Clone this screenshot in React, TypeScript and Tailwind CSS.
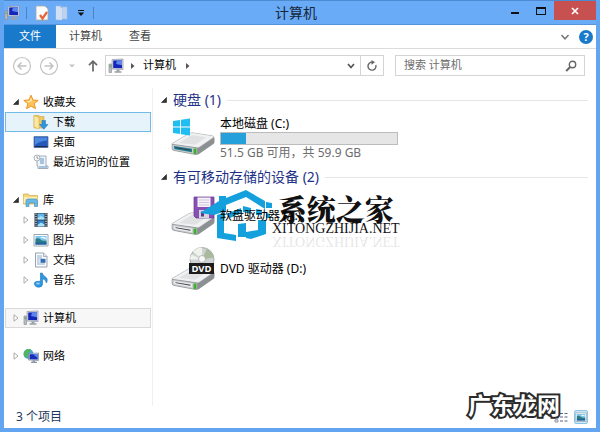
import React from "react";

type IconProps = { className?: string };

const ComputerIcon: React.FC<IconProps> = ({ className = "w-4 h-4" }) => (
  <svg viewBox="0 0 16 16" className={className} aria-hidden="true">
    <path d="M1 6h2.500v8.500H1z" fill="#b9bcc0" stroke="#85888c" strokeWidth=".6" />
    <path d="M1.700 7.500h1.200v1.500H1.700z" fill="#4ca84c" />
    <path d="M4 1.500 15 1v10.500L4 11z" fill="#d7dae0" stroke="#8f95a3" strokeWidth=".7" />
    <path d="M5.200 2.600 14 2.200v8L5.200 9.900z" fill="#1426b8" />
    <path d="M9 2.400 14 2.200v5L8 6z" fill="#5e86ee" />
    <path d="M8.500 11.500h3v1.800h2v1.500h-7v-1.500h2z" fill="#9da1aa" />
  </svg>
);

const StarIcon = () => (
  <svg viewBox="0 0 16 16" className="w-4 h-4" aria-hidden="true">
    <path
      d="M8 1.200 10 6l5.200.4-4 3.300 1.300 5L8 12l-4.500 2.700 1.300-5-4-3.300L6 6z"
      fill="#fcc35a"
      stroke="#ef9423"
      strokeWidth="1"
      strokeLinejoin="round"
    />
    <path d="M8 3.500 9 7 5 8.500 3.500 7.200 7 6.700z" fill="#fff0b8" />
  </svg>
);

const DownloadsIcon = () => (
  <svg viewBox="0 0 16 16" className="w-4 h-4" aria-hidden="true">
    <path d="M1 1.500h5l1 1h4V14H1z" fill="#ecc767" stroke="#d5a63c" strokeWidth=".6" />
    <path d="M1 1.500 6 3.500V15l-5-2z" fill="#fae7a4" stroke="#d5a63c" strokeWidth=".5" />
    <path d="M9 6.500h3.500v4H15l-4.200 4.800L6.500 10.500H9z" fill="#2d96e0" stroke="#1a6fb5" strokeWidth=".5" />
  </svg>
);

const DesktopIcon = () => (
  <svg viewBox="0 0 16 16" className="w-4 h-4" aria-hidden="true">
    <path d="M1 2.500h14v11H1z" fill="#2559b8" stroke="#5d7aa8" strokeWidth=".8" />
    <path d="M2 3.500h12v3C9 7 6 8 2 11z" fill="#4b8ae0" />
    <path d="M1.500 12h13v1.200h-13z" fill="#1b2d55" />
  </svg>
);

const RecentIcon = () => (
  <svg viewBox="0 0 16 16" className="w-4 h-4" aria-hidden="true">
    <path d="M4 2h9v10h2v2.500H5V12H4z" fill="#f2f5f8" stroke="#8d9aa8" strokeWidth=".8" />
    <path d="M7 5h4M7 7h4M7 9h4M6 13h8" stroke="#5793ca" strokeWidth="1" />
    <circle cx="4" cy="4" r="3" fill="#f4f6f8" stroke="#9aa2ab" strokeWidth=".8" />
    <path d="M4 2.300V4l1.500.7" stroke="#555" strokeWidth=".6" fill="none" />
  </svg>
);

const LibraryIcon = () => (
  <svg viewBox="0 0 16 16" className="w-4 h-4" aria-hidden="true">
    <path d="M.5 2h5l1 1.500h8V12H.5z" fill="#f3d77c" stroke="#d0ab48" strokeWidth=".7" />
    <path d="M.8 5h13.500v6H.8z" fill="#fbedb4" />
    <path d="M3 14.500V9q0-2 2-2h7.500q2 0 2 2v5.500h-3V11H6v3.500z" fill="#68b9e8" stroke="#3c87bb" strokeWidth=".6" />
  </svg>
);

const VideoIcon = () => (
  <svg viewBox="0 0 16 16" className="w-4 h-4" aria-hidden="true">
    <path d="M1.500 1h13v14h-13z" fill="#333b42" />
    <path d="M4.500 1.500h7v6h-7z" fill="#60b8ee" />
    <path d="M4.500 8.500h7v6h-7z" fill="#2e86d0" />
    <path d="M4.500 6 8 4l3.500 2v1.500h-7zM4.500 13 8 10.500l3.500 2v2h-7z" fill="#aee0f6" />
    <path d="M3 1.500v13M13 1.500v13" stroke="#dfe5ea" strokeWidth="1.200" strokeDasharray="1.200 1.200" />
  </svg>
);

const PictureIcon: React.FC<IconProps> = ({ className = "w-4 h-4" }) => (
  <svg viewBox="0 0 16 16" className={className} aria-hidden="true">
    <path d="M1 2.500h14v11.500H1z" fill="#fff" stroke="#8e9ca8" strokeWidth=".9" />
    <path d="M2.500 4h11v8.500h-11z" fill="#7cc7ee" />
    <path d="M2.500 7q3-1.500 5 .5t6 1v4h-11z" fill="#2c7d83" />
    <path d="M2.500 10.500h11v2h-11z" fill="#2461a4" />
    <path d="M7 5.500q3-1.500 6 .5v1z" fill="#fff" />
  </svg>
);

const DocumentIcon = () => (
  <svg viewBox="0 0 16 16" className="w-4 h-4" aria-hidden="true">
    <path d="M2.500 1h8L14 4.500V15H2.500z" fill="#fbfcfd" stroke="#8d99a5" strokeWidth=".9" />
    <path d="M10.500 1v3.500H14" fill="#dce3ea" stroke="#8d99a5" strokeWidth=".7" />
    <path d="M4 4h5M4 6h5M4 8h2.500M4 10h2.500M4 12h8" stroke="#7fa5cc" strokeWidth=".9" />
    <path d="M7.500 6.800h5v4h-5z" fill="#336cb2" />
  </svg>
);

const MusicIcon = () => (
  <svg viewBox="0 0 16 16" className="w-4 h-4" aria-hidden="true">
    <path
      d="M7.500 1h1.700q.5 2.500 3.300 4t1 6q-.5-3.500-4-4.300V12q0 3-3.500 3.200T1.500 12.500 5 9.300q1.700-.3 2.500.2z"
      fill="#2d98e2"
      stroke="#1b6fb8"
      strokeWidth=".6"
    />
    <ellipse cx="5" cy="11.500" rx="1.800" ry="1" fill="#8fd0f7" />
  </svg>
);

const NetworkIcon = () => (
  <svg viewBox="0 0 16 16" className="w-4 h-4" aria-hidden="true">
    <circle cx="5.500" cy="6" r="5" fill="#44a9dd" />
    <path d="M2 2.500q3-2.500 6-1L7 4 4.500 5 5 8 3.500 10Q0 8 .8 5z" fill="#50b656" />
    <path d="M5.500 5.500 15.500 5v7.500l-10-.5z" fill="#d4d9e2" stroke="#69758f" strokeWidth=".6" />
    <path d="M6.500 6.300 14.700 6v5.500l-8.200-.3z" fill="#1630bb" />
    <path d="m10 6.200 4.700-.2v4z" fill="#5f8df0" />
    <path d="M9.500 12.500h2.500v1.200h2V15H8v-1.300h1.500z" fill="#8f97a6" />
  </svg>
);

const Arrow: React.FC<{ open?: boolean }> = ({ open }) => (
  <svg viewBox="0 0 6 8" className="w-[6px] h-2 shrink-0" aria-hidden="true">
    {open ? (
      <path d="M5.500 1.500v5H.5z" fill="#333" stroke="#222" strokeWidth=".6" />
    ) : (
      <path d="M1 .8 5 4 1 7.200z" fill="#fff" stroke="#999" strokeWidth=".8" />
    )}
  </svg>
);

interface TreeItem {
  label: string;
  icon: React.ReactNode;
  arrow?: "open" | "closed";
  child?: boolean;
  state?: "hover" | "selected";
}

const tree: TreeItem[][] = [
  [
    { label: "收藏夹", icon: <StarIcon />, arrow: "open" },
    { label: "下载", icon: <DownloadsIcon />, child: true, state: "hover" },
    { label: "桌面", icon: <DesktopIcon />, child: true },
    { label: "最近访问的位置", icon: <RecentIcon />, child: true },
  ],
  [
    { label: "库", icon: <LibraryIcon />, arrow: "open" },
    { label: "视频", icon: <VideoIcon />, arrow: "closed", child: true },
    { label: "图片", icon: <PictureIcon />, arrow: "closed", child: true },
    { label: "文档", icon: <DocumentIcon />, arrow: "closed", child: true },
    { label: "音乐", icon: <MusicIcon />, arrow: "closed", child: true },
  ],
  [{ label: "计算机", icon: <ComputerIcon />, arrow: "closed", state: "selected" }],
  [{ label: "网络", icon: <NetworkIcon />, arrow: "closed" }],
];

function rowColors(state?: string) {
  if (state === "hover") return "border-[#72bbe6] bg-[#e6f3fb]";
  if (state === "selected") return "border-[#dadada] bg-[#f7f7f7]";
  return "border-transparent";
}

const Sidebar = () => (
  <nav className="w-[149px] shrink-0 border-r border-[#f0f0f0] px-px pt-1 flex flex-col gap-[18px]">
    {tree.map((group, i) => (
      <ul key={i}>
        {group.map((item) => (
          <li key={item.label}>
            <button
              className={`w-full h-5 flex items-center gap-1 border text-[11px] leading-4 ${
                item.child ? "pl-[17px]" : "pl-[7px]"
              } ${rowColors(item.state)}`}
            >
              {item.arrow ? <Arrow open={item.arrow === "open"} /> : <span className="w-[6px]" />}
              {item.icon}
              <span className="whitespace-nowrap">{item.label}</span>
            </button>
          </li>
        ))}
      </ul>
    ))}
  </nav>
);

const DriveBody: React.FC<{ teal?: boolean }> = ({ teal }) => (
  <>
    <path d="M1 27.500 18 17.500q2-1 4-.7l19.500 3q2 .5 2 2.500v3.500q0 1.500-1.500 2.500L28 38q-1.500 1-3.500.6L3 34.500q-2-.5-2-2.500z" fill="#8c9093" />
    <path d="m1 27.500 17-10q2-1 4-.7l19.500 3q2.500.7.5 2L28.500 31q-1.500 1-3.500.6L2 28.500q-1.500-.4-1-1z" fill="#f0f1f2" stroke="#b4b7b9" strokeWidth=".5" />
    <path d="m8 27 13-8 14 2.200-10.500 7.600z" fill="#dfe1e3" />
    <path d="m1 28.300 24.500 3.500q1 .2 1 1.500V38q-1 .8-2 .6L3 34.500q-2-.5-2-2.500z" fill="#c9ccce" stroke="#7c8184" strokeWidth=".5" />
    <path d="m3 30 18 2.800v3.500L4 33.200q-1-.3-1-1.200z" fill={teal ? "#237f96" : "#eceded"} />
    <path d="m4.500 31.300 15 2.500v.9l-15-2.700z" fill="#34393c" />
    <path d="M22.500 32.500h3V38h-3z" fill="#43ac33" />
  </>
);

const HardDiskIcon = () => (
  <svg viewBox="0 0 44 40" className="w-11 h-10 shrink-0" aria-hidden="true">
    <DriveBody teal />
    <path d="m2 5 7-1v6.500H2zM10 3.800 19 2.500v8h-9zM2 11.500h7V18l-7-1zM10 11.500h9v8l-9-1.300z" fill="#20bdf2" />
  </svg>
);

const FloppyDriveIcon = () => (
  <svg viewBox="0 0 44 40" className="w-11 h-10 shrink-0" aria-hidden="true">
    <DriveBody />
    <path d="M23 1h20v21H25l-2-2z" fill="#8950b3" stroke="#653790" strokeWidth=".7" />
    <path d="M26.500 1.500h13V11h-13z" fill="#f4f1f8" />
    <path d="M28 4h10M28 6.500h10M28 9h10" stroke="#c4b4d3" strokeWidth=".7" />
    <path d="M28 14h10v8H28z" fill="#d5d5dd" />
    <path d="M30 15.500h3v5h-3z" fill="#603785" />
  </svg>
);

const DvdDriveIcon = () => (
  <svg viewBox="0 0 44 44" className="w-11 h-11 shrink-0" aria-hidden="true">
    <g transform="translate(0 4)">
      <DriveBody />
    </g>
    <circle cx="31" cy="12.500" r="12" fill="#cfd2d2" stroke="#909596" strokeWidth=".7" />
    <path d="M31 12.500 22 4.500q4-4 9-4zM31 12.500h-12q0-3 1.500-5z" fill="#eff3ec" />
    <path d="M31 12.500 36 1.500q6 3 7 9z" fill="#a9b99e" />
    <circle cx="31" cy="12" r="3.500" fill="#f7f7f7" stroke="#999" strokeWidth=".6" />
    <path d="M18 16h25v11H18z" fill="#1b1b1b" />
    <text x="30.500" y="25" fontSize="9.500" fontWeight="700" textAnchor="middle" fill="#fff" fontFamily="Noto Sans, sans-serif">
      DVD
    </text>
  </svg>
);

const SectionTitle: React.FC<{ children: React.ReactNode }> = ({ children }) => (
  <div className="flex items-center gap-[6px] h-6">
    <Arrow open />
    <h2 className="text-[14px] leading-6 text-[#1e3287] whitespace-nowrap">{children}</h2>
    <span className="flex-1 h-px bg-[#e6e6e6]" />
  </div>
);

const Watermark = () => (
  <div className="absolute left-[39px] top-0 flex items-start pointer-events-none">
    <svg viewBox="0 0 80 56" className="w-20 h-14 -mr-2" aria-hidden="true">
      <path
        d="M0 24 19 12V7h7v2L46 1l19 11v8L46 8 26 16v6L14 26z"
        fill="#14a0dc"
      />
      <path d="M17 26l8-3v6l-1 1v14l12 2v6l-19-3zM26 25l15-6v5l-11 5zM38 35l8-1v14h-8zM46 43l12-2V31h8v14l-15 5-5-1z" fill="#14a0dc" />
      <path d="M43 17l8 2v6l-8-2zM56 20l6 1v5h-6zM66 13l6 1v5h-6zM66 24l4 1v4h-4z" fill="#14a0dc" />
    </svg>
    <div className="flex flex-col items-center text-[#111] pt-[6px]">
      <span className='font-["Noto_Serif_CJK_SC","Noto_Sans_CJK_SC",serif] font-black text-[29px] leading-7 whitespace-nowrap'>
        系统之家
      </span>
      <span className='font-["Liberation_Serif",serif] text-[14px] leading-3'>XITONGZHIJIA.NET</span>
      <span
        className='font-["Liberation_Serif",serif] text-[14px] leading-3 -scale-y-100 opacity-10'
        aria-hidden="true"
      >
        XITONGZHIJIA.NET
      </span>
    </div>
  </div>
);

const TitleBar = () => (
  <header className="h-[25px] grid grid-cols-[1fr_auto_1fr] border-t border-[#4c8ad2] border-b border-b-[#5695dc]">
    <div className="flex items-center">
      <ComputerIcon />
      <span className="w-px h-3 bg-[#4d84c0] ml-[6px]" />
      <button aria-label="属性" className="ml-2">
        <svg viewBox="0 0 14 16" className="w-[14px] h-4">
          <path d="M1 1h9l3 3v11H1z" fill="#fbfbfb" stroke="#aaa7a0" strokeWidth=".8" />
          <path d="m5 10 2.500 3.500L12 7" fill="none" stroke="#e8623a" strokeWidth="2.200" />
        </svg>
      </button>
      <button aria-label="新建文件夹" className="ml-[6px]">
        <svg viewBox="0 0 14 16" className="w-[14px] h-4">
          <path d="M1 1h5v14H1zM7 2h5v12H7z" fill="#bcd2ee" stroke="#a6c0e3" strokeWidth=".6" />
          <path d="M1 1l6 2v12l-6-1z" fill="#d2e0f3" />
        </svg>
      </button>
      <button aria-label="自定义快速访问工具栏" className="ml-2">
        <svg viewBox="0 0 8 8" className="w-2 h-2">
          <path d="M1 1h6v1H1zM.8 3.500h6.400L4 7z" fill="#111" />
        </svg>
      </button>
      <span className="w-px h-3 bg-[#4d84c0] ml-2" />
    </div>
    <h1 className="text-[14px] leading-[23px] mr-2 text-[#16263a]">计算机</h1>
    <div className="flex justify-end items-start">
      <button aria-label="最小化" className="w-[26px] h-5 flex items-center justify-center">
        <span className="w-2 h-[2px] bg-[#111] mt-1" />
      </button>
      <button aria-label="最大化" className="w-[26px] h-5 flex items-center justify-center">
        <span className="w-[10px] h-2 border border-t-2 border-[#111]" />
      </button>
      <button aria-label="关闭" className="w-[42px] h-[19px] bg-[#c75050] flex items-center justify-center">
        <svg viewBox="0 0 8 8" className="w-2 h-2">
          <path d="m1 1 6 6M7 1 1 7" stroke="#fff" strokeWidth="1.700" />
        </svg>
      </button>
    </div>
  </header>
);

const RibbonTabs = () => (
  <div className="flex items-center h-6 border-b border-[#dadbdc] text-[11px] text-[#444]">
    <button className="w-[52px] h-full bg-[#1979ca] text-white">文件</button>
    <button className="ml-[13px]">计算机</button>
    <button className="ml-[27px]">查看</button>
    <button aria-label="展开功能区" className="ml-auto">
      <svg viewBox="0 0 10 8" className="w-[10px] h-2">
        <path d="m1.500 2 3.500 3.800L8.500 2" fill="none" stroke="#777" strokeWidth="1.500" />
      </svg>
    </button>
    <button
      aria-label="帮助"
      className="ml-[9px] mr-[3px] w-[14px] h-[14px] rounded-full bg-[#1979ca] text-white font-bold leading-[14px]"
    >
      ?
    </button>
  </div>
);

const AddressBar = () => (
  <div className="flex items-center px-2 py-[6px] text-[11px]">
    <button aria-label="后退">
      <svg viewBox="0 0 20 20" className="w-5 h-5" fill="none" stroke="#c2c2c2">
        <circle cx="10" cy="10" r="8.500" strokeWidth="1.200" />
        <path d="M14.500 10H6M9.500 6.500 6 10l3.500 3.500" strokeWidth="1.500" />
      </svg>
    </button>
    <button aria-label="前进" className="ml-[7px]">
      <svg viewBox="0 0 20 20" className="w-5 h-5" fill="none" stroke="#c2c2c2">
        <circle cx="10" cy="10" r="8.500" strokeWidth="1.200" />
        <path d="M5.500 10H14M10.500 6.500 14 10l-3.500 3.500" strokeWidth="1.500" />
      </svg>
    </button>
    <button aria-label="最近位置" className="ml-[10px]">
      <svg viewBox="0 0 6 4" className="w-[6px] h-1">
        <path d="M0 .5h6L3 3.500z" fill="#c4c4c4" />
      </svg>
    </button>
    <button aria-label="上移" className="ml-3">
      <svg viewBox="0 0 12 14" className="w-3 h-[14px]" fill="none" stroke="#666" strokeWidth="1.700">
        <path d="M6 12.500V2.500M2 6.200l4-4 4 4" />
      </svg>
    </button>
    <div className="flex-1 flex items-center h-[21px] ml-[6px] border border-[#d4d4d4] pl-[2px]">
      <ComputerIcon />
      <svg viewBox="0 0 6 8" className="w-[6px] h-2 ml-[6px]">
        <path d="M1 1v6l3.500-3z" fill="#555" />
      </svg>
      <button className="ml-[7px]">计算机</button>
      <svg viewBox="0 0 6 8" className="w-[6px] h-2 ml-[9px]">
        <path d="M1 1v6l3.500-3z" fill="#555" />
      </svg>
      <button aria-label="以前的位置" className="ml-auto mr-1">
        <svg viewBox="0 0 10 8" className="w-[10px] h-2">
          <path d="m2 2 3 3.500L8 2" fill="none" stroke="#555" strokeWidth="1.700" />
        </svg>
      </button>
      <button aria-label="刷新" className="w-[23px] h-full border-l border-[#d4d4d4] flex items-center justify-center">
        <svg viewBox="0 0 12 12" className="w-3 h-3">
          <path d="M9.800 5a4 4 0 1 1-3.300-2.800" fill="none" stroke="#666" strokeWidth="1.400" />
          <path d="M5.500 0 9 2.300 5.500 4.800z" fill="#666" />
        </svg>
      </button>
    </div>
    <div className="w-[190px] flex items-center h-[21px] ml-[11px] mr-[3px] border border-[#d4d4d4] pl-2 pr-[7px]">
      <input
        aria-label="搜索 计算机"
        placeholder="搜索 计算机"
        className="flex-1 min-w-0 outline-none placeholder:text-[#6d6d6d]"
      />
      <svg viewBox="0 0 12 12" className="w-3 h-3" fill="none" stroke="#666">
        <circle cx="7.500" cy="4.500" r="3.200" strokeWidth="1.400" />
        <path d="M5.200 7 1.200 11" strokeWidth="1.900" />
      </svg>
    </div>
  </div>
);

const App: React.FC = () => {
  return (
    <div className='min-h-screen flex flex-col bg-[#6aabf7] border-x-4 border-b-4 border-[#64a5f2] text-black font-["Noto_Sans","Noto_Sans_CJK_SC",sans-serif]'>
      <TitleBar />
      <div className="flex-1 flex flex-col bg-white">
        <RibbonTabs />
        <AddressBar />
        <div className="flex-1 flex pt-[6px]">
          <Sidebar />
          <main className="flex-1 px-2">
            <SectionTitle>硬盘 (1)</SectionTitle>
            <div className="flex pl-[10px] h-[53px] pt-1">
              <HardDiskIcon />
              <div className="text-[12px] leading-4 ml-[5px]">
                <label htmlFor="disk-c" className="block">本地磁盘 (C:)</label>
                <div
                  id="disk-c"
                  role="meter"
                  aria-valuenow={14}
                  className="w-[178px] h-[13px] bg-[#e6e6e6] border border-[#bcbcbc]"
                >
                  <div className="h-full bg-[#26a0da]" style={{ width: "14%" }} />
                </div>
                <p className="text-[#6d6d6d]">51.5 GB 可用，共 59.9 GB</p>
              </div>
            </div>
            <SectionTitle>有可移动存储的设备 (2)</SectionTitle>
            <div className="relative flex items-center pl-[10px] h-[53px]">
              <FloppyDriveIcon />
              <span className="relative z-10 text-[12px] leading-4 ml-[5px]">软盘驱动器 (A:)</span>
              <Watermark />
            </div>
            <div className="flex items-center pl-[10px] h-[53px]">
              <DvdDriveIcon />
              <span className="text-[12px] leading-4 ml-[5px]">DVD 驱动器 (D:)</span>
            </div>
          </main>
        </div>
        <footer className="relative flex items-center h-[22px] pl-3 pr-2 text-[12px] text-[#1e395b]">
          <span>3 个项目</span>
          <button aria-label="详细信息" className="ml-auto">
            <svg viewBox="0 0 14 12" className="w-[14px] h-3">
              <path d="M1 1h3v3H1zM1 5h3v3H1zM1 9h3v2H1z" fill="none" stroke="#777f8c" strokeWidth=".8" />
              <path d="M6 2.500h3M10.500 2.500h3M6 6h3M10.500 6h3M6 10h3M10.500 10h3" stroke="#59657a" strokeWidth="1" />
            </svg>
          </button>
          <button aria-label="大图标" className="ml-[6px] bg-[#cfe9f8] border border-[#8bc4e4] rounded-xs">
            <PictureIcon className="w-3 h-3" />
          </button>
          <span className='absolute right-9 bottom-[10px] font-["Noto_Sans_CJK_SC",sans-serif] font-bold text-[23px] leading-7 text-white [-webkit-text-stroke:4px_#2b2b2b] [paint-order:stroke_fill] pointer-events-none'>
            广东龙网
          </span>
        </footer>
      </div>
    </div>
  );
};

export default App;
